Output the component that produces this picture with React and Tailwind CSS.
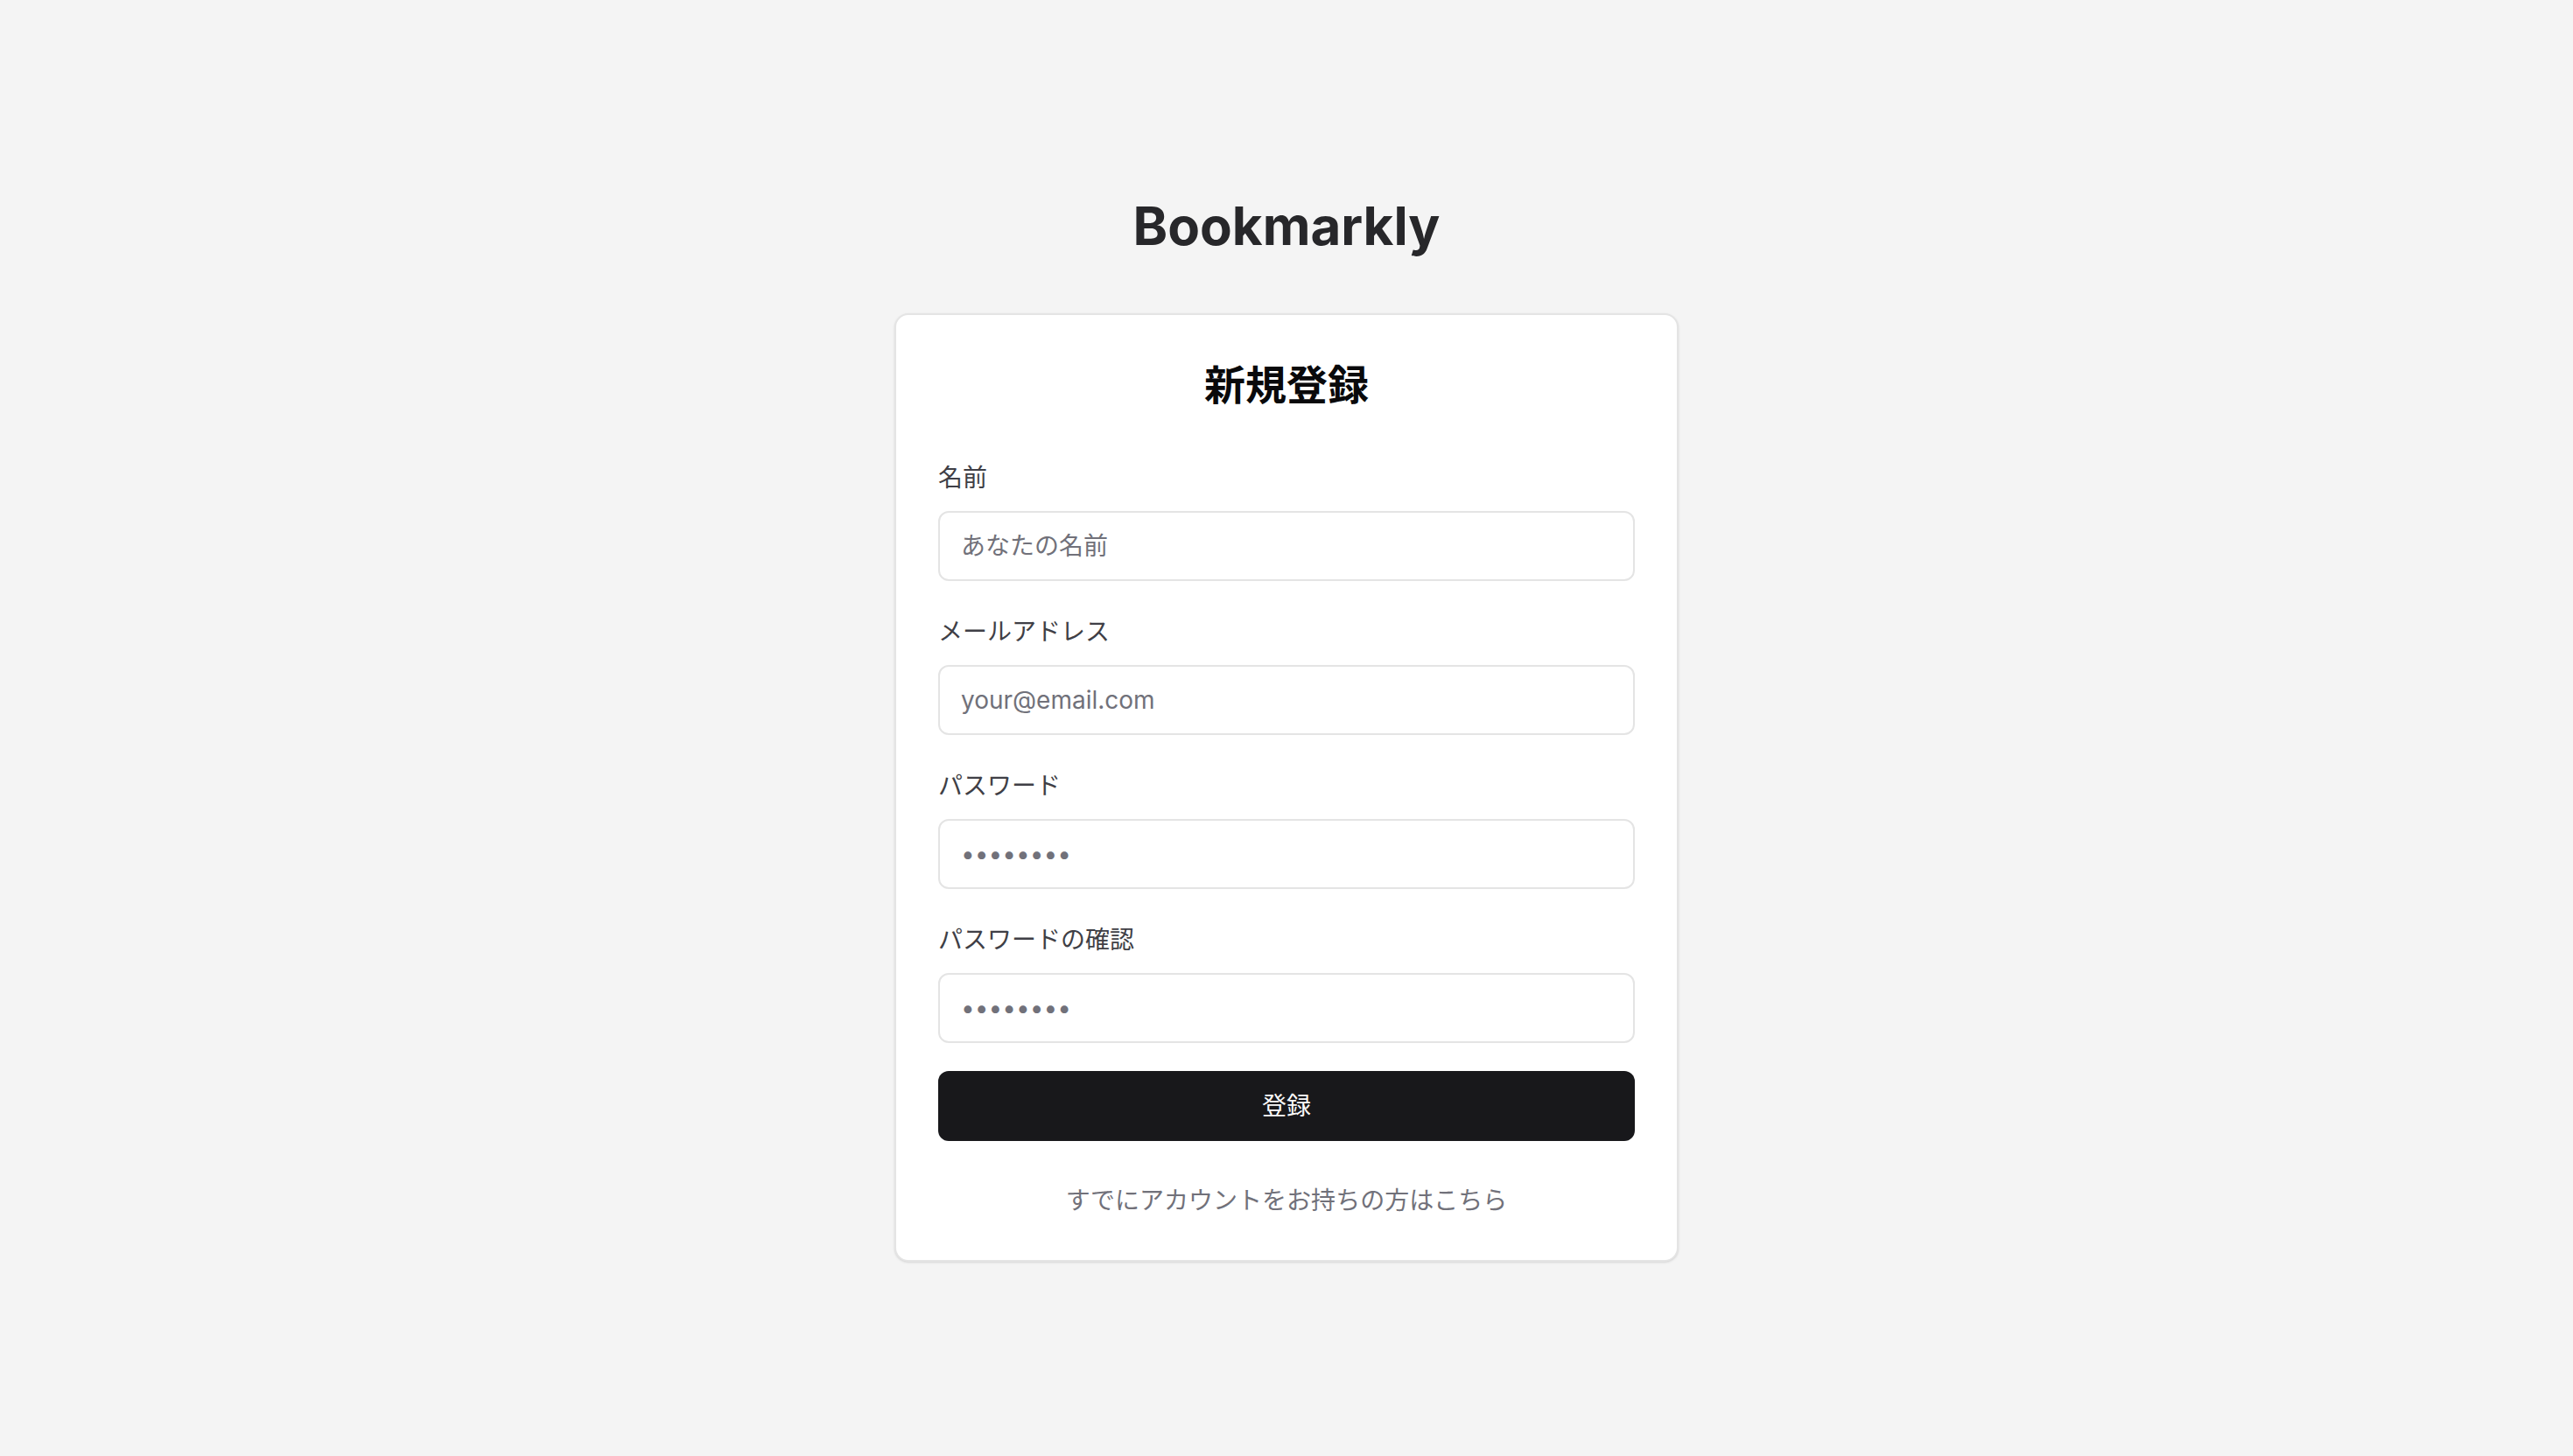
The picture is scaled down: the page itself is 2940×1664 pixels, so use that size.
const fields = [
  { id: "name", label: "名前", type: "text", placeholder: "あなたの名前" },
  { id: "email", label: "メールアドレス", type: "email", placeholder: "your@email.com" },
  { id: "password", label: "パスワード", type: "password", placeholder: "••••••••" },
  { id: "confirm", label: "パスワードの確認", type: "password", placeholder: "••••••••" },
];

function Field({ id, label, type, placeholder }) {
  return (
    <div className="flex flex-col">
      <label htmlFor={id} className="text-[28px] leading-10 text-[#3f3f46]">
        {label}
      </label>
      <input
        id={id}
        type={type}
        placeholder={placeholder}
        className="mt-[18px] h-20 w-full rounded-xl border-2 border-[#e4e4e4] bg-white px-6 text-[28px] text-[#18181b] placeholder:text-[#71717a]"
      />
    </div>
  );
}

export default function App() {
  return (
    <div className="flex min-h-screen flex-col items-center justify-center bg-[#f4f4f4] px-8 font-['Inter','Noto_Sans_CJK_JP',sans-serif]">
      <h1 className="text-[60px] leading-[72px] font-bold text-[#27272a]">Bookmarkly</h1>
      <main className="mt-16 w-full max-w-4xl rounded-2xl border-2 border-[#e4e4e4] bg-white p-12 shadow-sm">
        <h2 className="text-center text-[47px] leading-16 font-bold text-[#09090b]">新規登録</h2>
        <form className="mt-[54px]">
          <div className="flex flex-col gap-[38px]">
            {fields.map((f) => (
              <Field key={f.id} {...f} />
            ))}
          </div>
          <button type="button" className="mt-8 h-20 w-full rounded-xl bg-[#18181b] text-[28px] text-[#fafafa]">
            登録
          </button>
        </form>
        <p className="mt-12 text-center text-[28px] leading-10 text-[#71717a]">
          <a href="#login">すでにアカウントをお持ちの方はこちら</a>
        </p>
      </main>
    </div>
  );
}
